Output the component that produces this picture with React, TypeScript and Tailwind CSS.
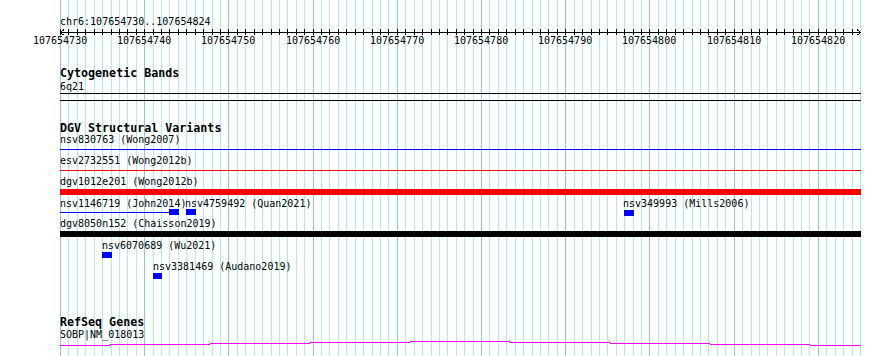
import React from 'react';

// 107654730..107654824 drawn over 800px starting at x=60
const X0 = 60;
const BP = 800 / 95;
const TRACK_END = 861;

const Grid: React.FC = () => {
  const lines = Array.from({ length: 96 }, (_, i) => i);
  return (
    <svg className="absolute inset-0" width={890} height={356} shapeRendering="crispEdges">
      {lines.map((i) => {
        const x = Math.round(X0 + i * BP) + 0.5;
        return <line key={i} x1={x} x2={x} y1={0} y2={356} stroke={i % 10 === 0 ? '#88c6ec' : '#aaecf2'} strokeWidth={1} />;
      })}
    </svg>
  );
};

const Ruler: React.FC = () => {
  const ticks = Array.from({ length: 95 }, (_, i) => i);
  return (
    <svg className="block h-[6px] w-[890px]" width={890} height={6} shapeRendering="crispEdges">
      <line x1={X0} x2={TRACK_END} y1={3.5} y2={3.5} stroke="#000" />
      {ticks.map((i) => {
        const x = Math.round(X0 + i * BP) + 0.5;
        return <line key={i} x1={x} x2={x} y1={0} y2={6} stroke="#000" />;
      })}
      <polyline points={`${X0 + 4},0.5 ${X0 + 0.5},3.5 ${X0 + 4},6.5`} fill="none" stroke="#000" />
      <polyline points={`${TRACK_END - 4},0.5 ${TRACK_END - 0.5},3.5 ${TRACK_END - 4},6.5`} fill="none" stroke="#000" />
    </svg>
  );
};

const RulerLabels: React.FC = () => {
  const majors = Array.from({ length: 10 }, (_, i) => i);
  return (
    <div className="relative h-[13px]">
      {majors.map((i) => (
        <span key={i} className="absolute top-0 w-[54px] text-center" style={{ left: Math.round(X0 + i * 10 * BP) - 27 }}>
          {107654730 + i * 10}
        </span>
      ))}
    </div>
  );
};

const TrackTitle: React.FC<{ children: React.ReactNode; className?: string }> = ({ children, className }) => (
  <div className={`ml-[60px] text-[11.67px] font-bold leading-[11px] ${className ?? ''}`}>{children}</div>
);

// one feature: label over its glyph, placed at its genomic x
const Feature: React.FC<{ left: string; label: string; children: React.ReactNode }> = ({ left, label, children }) => (
  <div className={`absolute top-0 flex flex-col ${left}`}>
    <span className="h-[11px] whitespace-nowrap">{label}</span>
    {children}
  </div>
);

const geneSegments: [number, number, number][] = [
  [60, 110, 345],
  [110, 210, 344],
  [210, 310, 343],
  [310, 410, 342],
  [410, 510, 341],
  [510, 610, 342],
  [610, 710, 343],
  [710, 810, 344],
  [810, 861, 345],
];

export default function App() {
  return (
    <div className="relative h-[356px] w-[890px] overflow-hidden bg-white font-['DejaVu_Sans_Mono',monospace] text-[10px] leading-[11px] text-black">
      <Grid />

      <div className="relative flex flex-col pt-[16px]">
        <div className="ml-[60px] h-[13px]">chr6:107654730..107654824</div>
        <Ruler />
        <RulerLabels />

        <TrackTitle className="mt-[20px] h-[13px]">Cytogenetic Bands</TrackTitle>
        <div className="ml-[60px] h-[12px]">6q21</div>
        <div className="ml-[60px] h-[8px] w-[801px] border-y border-black" />

        <TrackTitle className="mt-[22px] h-[11px]">DGV Structural Variants</TrackTitle>

        <div className="relative h-[21px]">
          <Feature left="left-[60px]" label="nsv830763 (Wong2007)">
            <div className="mt-[4px] h-px w-[801px] bg-[#0000ff]" />
          </Feature>
        </div>
        <div className="relative h-[21px]">
          <Feature left="left-[60px]" label="esv2732551 (Wong2012b)">
            <div className="mt-[4px] h-px w-[801px] bg-[#ff0000]" />
          </Feature>
        </div>
        <div className="relative h-[22px]">
          <Feature left="left-[60px]" label="dgv1012e201 (Wong2012b)">
            <div className="mt-[2px] h-[6px] w-[801px] bg-[#ff0000]" />
          </Feature>
        </div>
        <div className="relative h-[20px]">
          <Feature left="left-[60px]" label="nsv1146719 (John2014)">
            <div className="flex h-[6px] items-center">
              <div className="h-px w-[109px] bg-[#0000ff]" />
              <div className="h-[6px] w-[10px] bg-[#0000ff]" />
            </div>
          </Feature>
          <Feature left="left-[185px]" label="nsv4759492 (Quan2021)">
            <div className="ml-px h-[6px] w-[10px] bg-[#0000ff]" />
          </Feature>
          <Feature left="left-[623px]" label="nsv349993 (Mills2006)">
            <div className="ml-px mt-px h-[6px] w-[10px] bg-[#0000ff]" />
          </Feature>
        </div>
        <div className="relative h-[22px]">
          <Feature left="left-[60px]" label="dgv8050n152 (Chaisson2019)">
            <div className="mt-[2px] h-[6px] w-[801px] bg-black" />
          </Feature>
        </div>
        <div className="relative h-[21px]">
          <Feature left="left-[102px]" label="nsv6070689 (Wu2021)">
            <div className="mt-px h-[6px] w-[10px] bg-[#0000ff]" />
          </Feature>
        </div>
        <div className="relative h-[21px]">
          <Feature left="left-[153px]" label="nsv3381469 (Audano2019)">
            <div className="mt-px h-[6px] w-[9px] bg-[#0000ff]" />
          </Feature>
        </div>

        <TrackTitle className="mt-[35px] h-[12px]">RefSeq Genes</TrackTitle>
        <div className="ml-[60px] h-[11px]">SOBP|NM_018013</div>
        <svg className="block h-[8px] w-[890px]" width={890} height={8} shapeRendering="crispEdges">
          {geneSegments.map(([a, b, y]) => (
            <line key={a} x1={a} x2={b} y1={y - 340 + 0.5} y2={y - 340 + 0.5} stroke="#ff00ff" strokeWidth={1} />
          ))}
        </svg>
      </div>
    </div>
  );
}
